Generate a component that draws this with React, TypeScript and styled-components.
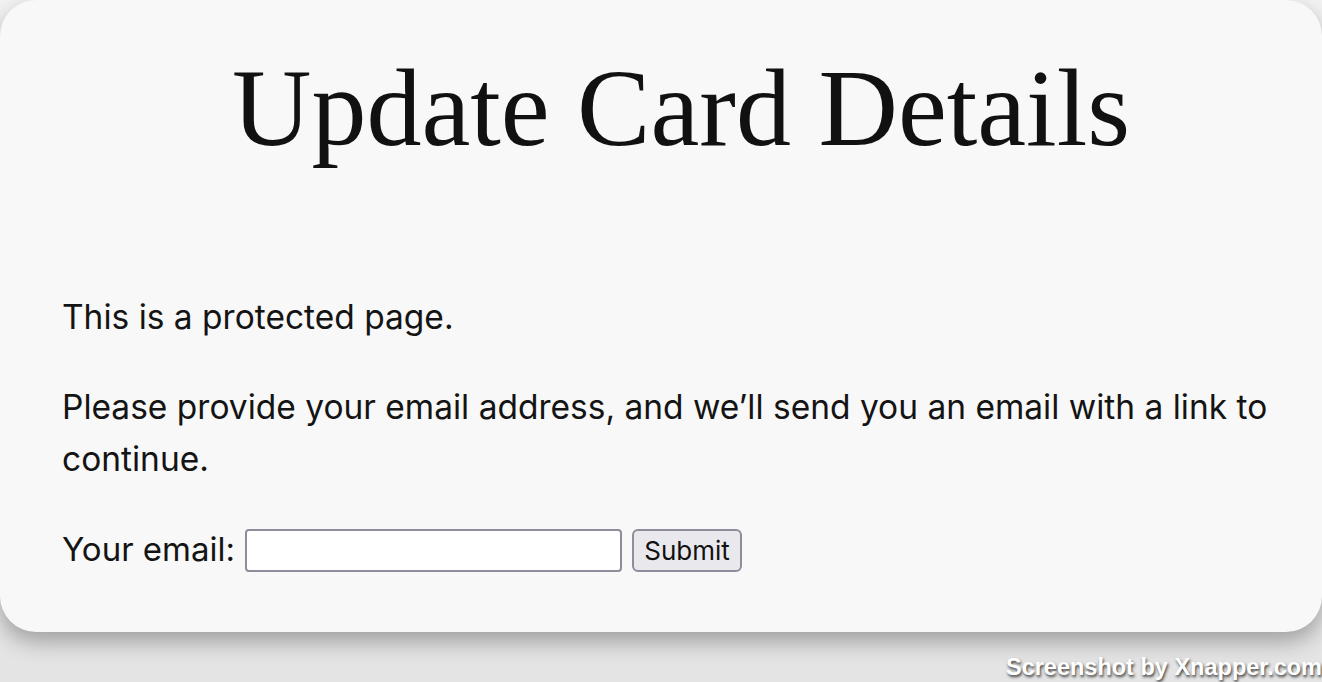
import React from "react";
import styled, { createGlobalStyle } from "styled-components";

const Global = createGlobalStyle`
  html, body { margin: 0; padding: 0; }
  body {
    width: 1322px;
    height: 682px;
    overflow: hidden;
    background: linear-gradient(180deg, #f2f2f2 0%, #e4e4e4 100%);
    font-family: Inter, "Noto Sans", sans-serif;
  }
`;

const Page = styled.div`
  position: relative;
  width: 1322px;
  height: 682px;
`;

const Card = styled.main`
  box-sizing: border-box;
  width: 1322px;
  height: 632px;
  background: #f8f8f8;
  border-radius: 36px;
  box-shadow: 0 10px 22px rgba(0, 0, 0, 0.3);
  padding: 53px 44px 0 62px;
  color: #141414;
`;

const Title = styled.h1`
  margin: 0 0 128px 0;
  padding-left: 22px;
  font-family: "Liberation Serif", "Times New Roman", serif;
  font-weight: 400;
  font-size: 110px;
  line-height: 110px;
  text-align: center;
  color: #111;
`;

const Para = styled.p`
  margin: 0 0 38px 0;
  font-size: 33.5px;
  line-height: 52px;
`;

const Form = styled.form`
  display: flex;
  align-items: flex-start;
  gap: 10px;
  font-size: 33px;
  line-height: 52px;
`;

const Label = styled.label`
  margin-top: 0;
`;

const Input = styled.input`
  box-sizing: border-box;
  width: 377px;
  height: 43px;
  border: 2px solid #8f8d9b;
  border-radius: 4px;
  background: #fff;
  font-size: 24px;
  padding: 0 6px;
  margin-top: 6px;
`;

const Button = styled.button`
  box-sizing: border-box;
  height: 43px;
  width: 110px;
  border: 2px solid #8f8d9b;
  border-radius: 6px;
  background: #e9e9ed;
  font-family: Inter, "Noto Sans", sans-serif;
  font-size: 26px;
  color: #111;
  padding: 0;
  margin-top: 6px;
`;

const Watermark = styled.div`
  position: absolute;
  right: 0;
  bottom: 1px;
  font-family: "Liberation Sans", Arial, sans-serif;
  font-weight: 700;
  font-size: 23.5px;
  color: #fff;
  text-shadow: 1px 2px 3px rgba(0, 0, 0, 0.75);
  white-space: nowrap;
`;

export default function App() {
  return (
    <Page>
      <Global />
      <Card>
        <Title>Update Card Details</Title>
        <Para>This is a protected page.</Para>
        <Para>
          Please provide your email address, and we’ll send you an email with a
          link to continue.
        </Para>
        <Form onSubmit={(e) => e.preventDefault()}>
          <Label htmlFor="email">Your email:</Label>
          <Input id="email" type="email" />
          <Button type="submit">Submit</Button>
        </Form>
      </Card>
      <Watermark>Screenshot by Xnapper.com</Watermark>
    </Page>
  );
}
